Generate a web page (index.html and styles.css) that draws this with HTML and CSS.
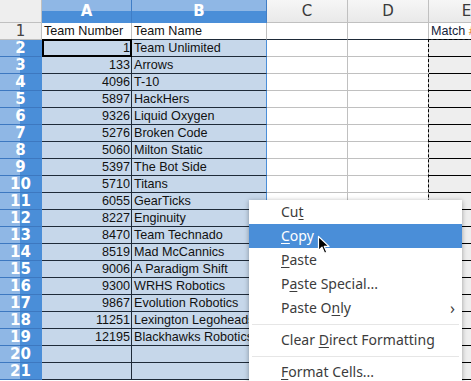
FILE: index.html
```html
<!DOCTYPE html>
<html lang="en">
<head>
    <meta charset="UTF-8">
    <meta name="viewport" content="width=device-width, initial-scale=1.0">
    <title>Teams</title>
    <link rel="stylesheet" href="styles.css">
</head>
<body>
    <div class="sheet" id="sheet">
        <div class="row head">
            <div class="hcell corner"></div>
            <div class="hcell colhead sel">A</div>
            <div class="hcell colhead sel">B</div>
            <div class="hcell colhead">C</div>
            <div class="hcell colhead">D</div>
            <div class="hcell colhead">E</div>
        </div>
        <div class="row first">
            <div class="hcell rowhead">1</div>
            <div class="cell">Team Number</div>
            <div class="cell">Team Name</div>
            <div class="cell"></div>
            <div class="cell"></div>
            <div class="cell match">Match <span class="more">#</span></div>
        </div>
    </div>

    <div class="marquee"></div>

    <div class="menu">
        <div class="item">Cu<u>t</u></div>
        <div class="item active"><u>C</u>opy</div>
        <div class="item"><u>P</u>aste</div>
        <div class="item">P<u>a</u>ste Special...</div>
        <div class="item sub">Paste O<u>n</u>ly <span class="arrow">›</span></div>
        <div class="sep"></div>
        <div class="item">Clear <u>D</u>irect Formatting</div>
        <div class="sep"></div>
        <div class="item"><u>F</u>ormat Cells...</div>
    </div>

    <svg class="pointer" width="14" height="20" viewBox="0 0 14 20">
        <path d="M1.5 1.5 L1.5 15.5 L5 12.2 L7.6 18.2 L9.8 17.2 L7.3 11.4 L12 11.4 Z" fill="#000" stroke="#fff" stroke-width="1.2" stroke-linejoin="round"/>
    </svg>

    <script>
        //Lista de equipos
        const teams = [
            [1, 'Team Unlimited'], [133, 'Arrows'], [4096, 'T-10'], [5897, 'HackHers'],
            [9326, 'Liquid Oxygen'], [5276, 'Broken Code'], [5060, 'Milton Static'],
            [5397, 'The Bot Side'], [5710, 'Titans'], [6055, 'GearTicks'], [8227, 'Enginuity'],
            [8470, 'Team Technado'], [8519, 'Mad McCannics'], [9006, 'A Paradigm Shift'],
            [9300, 'WRHS Robotics'], [9867, 'Evolution Robotics'], [11251, 'Lexington Legoheads'],
            [12195, 'Blackhawks Robotics'], ['', ''], ['', '']
        ];

        const sheet = document.getElementById('sheet');

        //Crear una fila por equipo
        teams.forEach((team, i) => {
            const row = document.createElement('div');
            row.className = 'row';
            row.innerHTML =
                '<div class="hcell rowhead sel">' + (i + 2) + '</div>' +
                '<div class="cell marked num' + (i === 0 ? ' cursor' : '') + '">' + team[0] + '</div>' +
                '<div class="cell marked name">' + team[1] + '</div>' +
                '<div class="cell"></div>' +
                '<div class="cell"></div>' +
                '<div class="cell copied"></div>';
            sheet.appendChild(row);
        });
    </script>
</body>
</html>
```

FILE: styles.css
```css
body {
    margin: 0;
    background-color: #ffffff;
    overflow: hidden;
    width: 471px;
    height: 381px;
    position: relative;
}
.sheet {
    width: 505px;
    font-family: 'Liberation Sans', Arial, sans-serif;
    font-size: 12.6px;
    color: #111;
}
.row {
    display: grid;
    grid-template-columns: 42px 90px 135px 81px 81px 76px;
    height: 17px;
}
.row.head {
    height: 23px;
}
.hcell,
.cell {
    box-sizing: border-box;
    border-right: 1px solid #c0c0c0;
    border-bottom: 1px solid #c0c0c0;
    white-space: nowrap;
    overflow: hidden;
}
.hcell {
    font-family: 'DejaVu Sans', sans-serif;
    font-size: 15px;
    color: #3a3a3a;
    text-align: center;
    background: linear-gradient(#f6f6f6, #e9e9e9);
    line-height: 22px;
}
.corner {
    background: #eeeeee;
}
.colhead.sel {
    background: linear-gradient(#8fb7e5 0 50%, #4a8ed8 50%);
    color: #ffffff;
    font-weight: bold;
    border-right-color: #3f7dc6;
    border-bottom-color: #4a8ed8;
}
.rowhead {
    line-height: 16px;
    background: #efefef;
    color: #444;
}
.rowhead.sel {
    background: linear-gradient(to right, #8fb7e5 0 20px, #4a8ed8 20px);
    color: #ffffff;
    font-weight: bold;
    border-bottom-color: #3d78c0;
    border-right-color: #4a8ed8;
}
.cell {
    line-height: 16px;
    padding: 0 1px 0 2px;
}
.first .cell {
    border-bottom-color: #1e2a38;
}
.cell.marked {
    background-color: #c6d7ea;
    border-bottom-color: #1e2a38;
    border-right-color: #1e2a38;
}
.cell.name {
    border-right-color: #4a8ed8;
}
.cell.num {
    text-align: right;
}
.cell.cursor {
    position: relative;
    overflow: visible;
}
.cell.cursor::after {
    content: '';
    position: absolute;
    top: -1px;
    left: 0;
    right: -1px;
    bottom: -1px;
    border: 2px solid #000;
}
.cell.copied {
    background-color: #eeeeee;
    border-bottom-color: #000;
}
.match {
    color: #16233a;
}
.match .more {
    color: #e07a10;
}
.marquee {
    position: absolute;
    left: 428px;
    top: 39px;
    right: -2px;
    bottom: -2px;
    border-top: 1px dashed #000;
    border-left: 1px dashed #000;
}
.menu {
    position: absolute;
    left: 249px;
    top: 200px;
    width: 213px;
    background-color: #ffffff;
    box-shadow: 0 1px 5px rgba(0,0,0,0.35);
    font-family: 'Noto Sans', sans-serif;
    font-size: 14px;
    color: #3c3c3c;
}
.item {
    height: 24px;
    line-height: 24px;
    padding-left: 32px;
    position: relative;
    white-space: nowrap;
}
.item u {
    text-underline-offset: 2px;
}
.item.active {
    background-color: #4a8ed8;
    color: #ffffff;
}
.arrow {
    position: absolute;
    right: 7px;
    top: 0;
    font-size: 16px;
}
.sep {
    height: 8px;
    position: relative;
}
.sep::after {
    content: '';
    position: absolute;
    left: 3px;
    right: 3px;
    top: 4px;
    border-top: 1px solid #e6e6e6;
}
.pointer {
    position: absolute;
    left: 317px;
    top: 235px;
}
```
